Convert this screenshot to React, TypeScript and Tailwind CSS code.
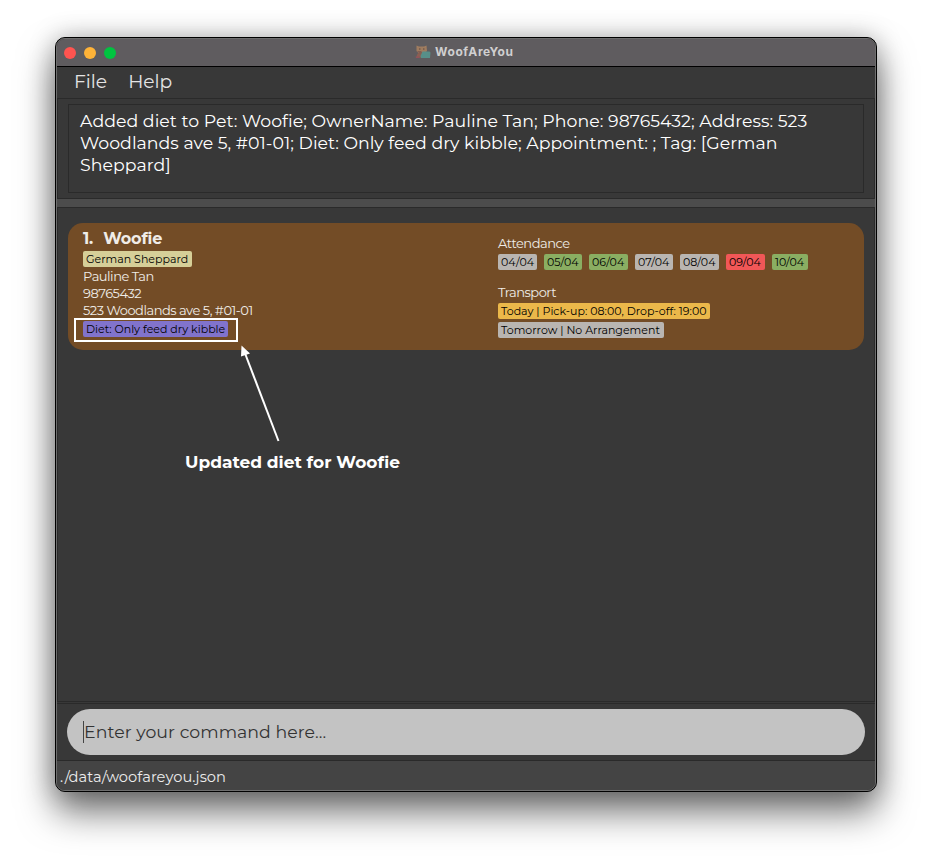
import type { ReactNode } from "react";

const attendance = [
  { date: "04/04", color: "bg-[#b9b5b1]", width: "w-[39px]" },
  { date: "05/04", color: "bg-[#8aae62]", width: "w-[38px]" },
  { date: "06/04", color: "bg-[#8aae62]", width: "w-[39px]" },
  { date: "07/04", color: "bg-[#b9b5b1]", width: "w-[38px]" },
  { date: "08/04", color: "bg-[#b9b5b1]", width: "w-[39px]" },
  { date: "09/04", color: "bg-[#f15757]", width: "w-[39px]" },
  { date: "10/04", color: "bg-[#8aae62]", width: "w-[36px]" },
];

function Tag({ className, children }: { className: string; children: ReactNode }) {
  return (
    <span className={`flex h-4 items-center rounded-xs pl-[3px] text-[11px] leading-4 tracking-[0.02px] whitespace-nowrap text-black ${className}`}>
      {children}
    </span>
  );
}

function AppIcon() {
  return (
    <svg className="mb-px h-[14px] w-4 opacity-80" viewBox="0 0 16 14">
      <path d="M1.5 12.5c0-3 1.5-5 4-5.5l3 1v5z" fill="#96604f" />
      <path d="M1.5 .5L4 1.5h5L11.5 .5l.5 5.5-2 2H3.500L1.500 6z" fill="#b08560" />
      <path d="M2 6h4l1.500 1.500L5 9z" fill="#8c5f50" />
      <path d="M4 3.500h1.500v1H4zM8 3.500h1.500v1H8z" fill="#5b4338" />
      <path d="M7.500 6.500h7l1 1-.5 5.500H6l-.5-2z" fill="#569c94" />
      <path d="M0.500 11.500h3.500l1 1.500H1z" fill="#a0505a" />
    </svg>
  );
}

function TitleBar() {
  return (
    <div className="flex h-7 shrink-0 items-center border-b border-black bg-[#5f5c5f] pl-[7px]">
      <div className="flex gap-2">
        <span className="size-3 rounded-full bg-[#ff5450]" />
        <span className="size-3 rounded-full bg-[#ffb338]" />
        <span className="size-3 rounded-full bg-[#00c440]" />
      </div>
      <div className="ml-[299px] flex items-center gap-1">
        <AppIcon />
        <span className="mb-0.5 font-['Inter',sans-serif] text-[12px] leading-4 font-bold tracking-[0.6px] text-[#d0cfd0]">WoofAreYou</span>
      </div>
    </div>
  );
}

function PetCard() {
  return (
    <div className="relative flex h-[127px] rounded-[15px] bg-[#734c26] pl-[15px] text-[13px] tracking-[-0.48px] text-[#f0ece8]">
      <div className="flex w-[415px] flex-col items-start pt-1.5">
        <div className="flex h-[22px] gap-[10px] text-[16px] leading-[19px] font-bold tracking-[-0.15px]">
          <span>1.</span>
          <span>Woofie</span>
        </div>
        <Tag className="w-[109px] bg-[#d6cf98]">German Sheppard</Tag>
        <div className="pt-px leading-[17px]">
          <div>Pauline Tan</div>
          <div>98765432</div>
          <div>523 Woodlands ave 5, #01-01</div>
        </div>
        <Tag className="mt-[2px] w-[145px] bg-[#8173cc]">Diet: Only feed dry kibble</Tag>
      </div>
      <div className="flex flex-col items-start pt-3">
        <div className="h-[19px] leading-[17px]">Attendance</div>
        <div className="flex gap-[7px]">
          {attendance.map((day) => (
            <Tag key={day.date} className={`${day.width} ${day.color}`}>{day.date}</Tag>
          ))}
        </div>
        <div className="mt-[14px] h-[19px] leading-[17px]">Transport</div>
        <Tag className="w-[212px] bg-[#ebb84a]">Today | Pick-up: 08:00, Drop-off: 19:00</Tag>
        <Tag className="mt-[3px] w-[166px] bg-[#b9b5b1]">Tomorrow | No Arrangement</Tag>
      </div>
      <div className="absolute top-[95px] left-[6px] h-6 w-[164px] border-2 border-white" />
    </div>
  );
}

function Annotation() {
  return (
    <>
      <svg className="absolute top-[136px] left-[179px] h-[100px] w-[48px]" viewBox="0 0 48 100">
        <path d="M7.5 8L41.500 97" stroke="#fff" strokeWidth="2" />
        <path d="M4.500 1.500L13 9.500L4 12.500z" fill="#fff" />
      </svg>
      <div className="absolute top-[243px] left-[127px] text-[17px] leading-[22px] font-bold whitespace-nowrap text-white">
        Updated diet for Woofie
      </div>
    </>
  );
}

export default function App() {
  return (
    <div className="h-[865px] w-[932px] overflow-hidden bg-white pt-[37px] pl-[55px] font-['Montserrat','Inter',sans-serif]">
      <div className="flex h-[755px] w-[822px] rounded-[10px] border border-black bg-[#383838] shadow-[0_20px_36px_rgba(0,0,0,0.55),0_0_26px_rgba(0,0,0,0.25)]">
        <div className="flex min-w-0 flex-1 flex-col overflow-hidden rounded-[9px] border border-[#6e6e6e]">
          <TitleBar />
          <div className="flex h-[31px] shrink-0 gap-[21px] pl-[17px] text-[18.67px] leading-[30px] text-[#e4e4e4]">
            <span>File</span>
            <span>Help</span>
          </div>
          <div className="flex h-[101px] shrink-0 flex-col border border-[#2a2a2a] px-[10px] pt-[5px]">
            <div className="h-[89px] border border-[#2a2a2a] px-[11px] pt-[5px] text-[17.33px] leading-[22px] tracking-[0.045px] whitespace-nowrap text-white">
              <div>Added diet to Pet: Woofie; OwnerName: Pauline Tan; Phone: 98765432; Address: 523</div>
              <div className="tracking-[0.03px]">Woodlands ave 5, #01-01; Diet: Only feed dry kibble; Appointment: ; Tag: [German</div>
              <div>Sheppard]</div>
            </div>
          </div>
          <div className="h-2 shrink-0 bg-[#4c4c4c]" />
          <div className="relative h-[495px] shrink-0 border border-[#2a2a2a] px-[10px] pt-[15px]">
            <PetCard />
            <Annotation />
          </div>
          <div className="mt-px flex h-[57px] shrink-0 border-t border-[#2a2a2a] px-[10px] pt-[5px]">
            <div className="flex h-[46px] flex-1 items-center rounded-full bg-[#c3c3c3] pl-4">
              <span className="h-[22px] w-px bg-[#444]" />
              <span className="text-[17.33px] leading-[22px] tracking-[0.05px] text-[#333]">Enter your command here...</span>
            </div>
          </div>
          <div className="flex-1 border-t border-[#2a2a2a] bg-[#444] pl-[3px] text-[14.67px] leading-[32px] tracking-[0.04px] text-[#ececec]">
            ./data/woofareyou.json
          </div>
        </div>
      </div>
    </div>
  );
}
